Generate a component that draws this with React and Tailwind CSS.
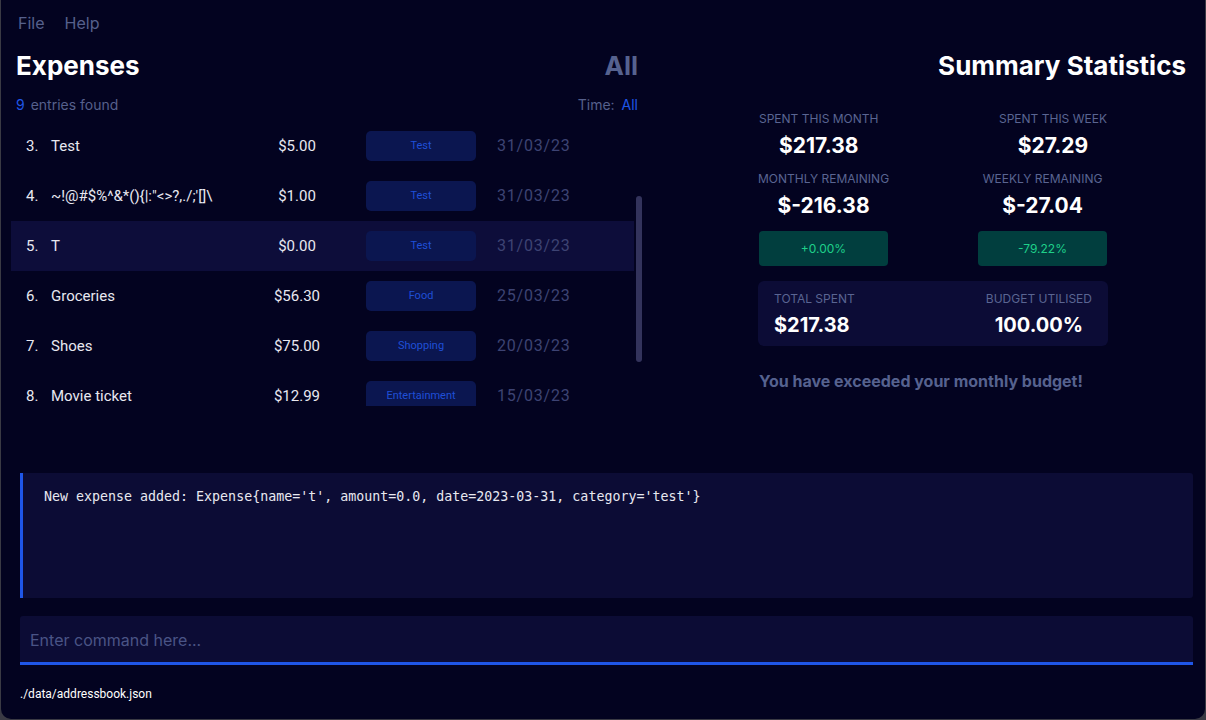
import React from 'react';

const rows = [
  { n: 3, name: 'Test', amount: '$5.00', cat: 'Test', date: '31/03/23' },
  { n: 4, name: `~!@#$%^&*(){|:"<>?,./;'[]\\`, amount: '$1.00', cat: 'Test', date: '31/03/23' },
  { n: 5, name: 'T', amount: '$0.00', cat: 'Test', date: '31/03/23', selected: true },
  { n: 6, name: 'Groceries', amount: '$56.30', cat: 'Food', date: '25/03/23' },
  { n: 7, name: 'Shoes', amount: '$75.00', cat: 'Shopping', date: '20/03/23' },
  { n: 8, name: 'Movie ticket', amount: '$12.99', cat: 'Entertainment', date: '15/03/23' },
];

function ExpenseRow({ row }) {
  return (
    <div className={`flex h-[50px] items-center text-[15px] text-[#e8e8f0] ${row.selected ? 'bg-[#0d0d3a]' : ''}`}>
      <span className="w-[40px] pl-[15px] shrink-0">{row.n}.</span>
      <span className="w-[205px] shrink-0 whitespace-nowrap">{row.name}</span>
      <span className="w-[82px] shrink-0 text-center">{row.amount}</span>
      <span className="ml-[28px] flex h-[30px] w-[110px] shrink-0 items-center justify-center rounded-[5px] bg-[#0b1650] text-[11px] text-[#1f4fd6]">
        {row.cat}
      </span>
      <span className="ml-[21px] text-[16px] tracking-[0.8px] text-[#3d4373]">{row.date}</span>
    </div>
  );
}

function Stat({ label, value, align }) {
  return (
    <div className={`flex flex-col items-center ${align}`}>
      <span className="whitespace-nowrap text-[12px] uppercase leading-none text-[#5a6592]">{label}</span>
      <span className="mt-[10px] whitespace-nowrap text-[21px] font-bold leading-none text-white">{value}</span>
    </div>
  );
}

export default function App() {
  return (
    <div className="h-[720px] w-[1206px] bg-[#3a3a44] font-['Inter',sans-serif]">
      <div className="mx-px flex h-[719px] flex-col rounded-b-[10px] bg-[#030320]">
        {/* menu bar */}
        <div className="flex h-[46px] items-center gap-[20px] pl-[17px] text-[16px] text-[#56608c]">
          <span>File</span>
          <span>Help</span>
        </div>

        {/* main content */}
        <div className="flex h-[427px]">
          {/* expense list */}
          <div className="ml-[10px] flex w-[631px] flex-col">
            <div className="flex h-[38px] items-center justify-between pl-[5px] pr-[4px]">
              <span className="text-[26px] font-bold text-white">Expenses</span>
              <span className="text-[26px] font-bold text-[#56628f]">All</span>
            </div>
            <div className="flex h-[37px] items-center justify-between pt-[3px] pl-[5px] pr-[4px] text-[14px] text-[#56608c]">
              <span>
                <span className="mr-[2px] text-[#1f56e8]">9</span> entries found
              </span>
              <span>
                Time: <span className="ml-[3px] text-[#1f56e8]">All</span>
              </span>
            </div>
            <div className="flex h-[285px]">
              <div className="w-[623px] overflow-hidden font-['Roboto',sans-serif]">
                {rows.map((r) => (
                  <ExpenseRow key={r.n} row={r} />
                ))}
              </div>
              <div className="ml-[2px] w-[6px]">
                <div className="mt-[75px] h-[166px] w-[6px] rounded-full bg-[#33335c]" />
              </div>
            </div>
          </div>

          {/* summary */}
          <div className="ml-[116px] flex w-[428px] flex-col">
            <div className="flex h-[38px] items-center justify-end">
              <span className="text-[26px] font-bold text-white">Summary Statistics</span>
            </div>
            <div className="mt-[29px] grid w-[350px] grid-cols-[129px_129px] gap-x-[90px] pl-px">
              <Stat label="Spent this month" value="$217.38" align="justify-self-start" />
              <Stat label="Spent this week" value="$27.29" align="justify-self-end" />
              <div className="mt-[17px]">
                <Stat label="Monthly remaining" value="$-216.38" />
              </div>
              <div className="mt-[17px]">
                <Stat label="Weekly remaining" value="$-27.04" />
              </div>
              <div className="mt-[15px] flex h-[35px] items-center justify-center rounded-[4px] bg-[#013e3e] text-[12px] text-[#1fd08a]">
                +0.00%
              </div>
              <div className="mt-[15px] flex h-[35px] items-center justify-center rounded-[4px] bg-[#013e3e] text-[12px] text-[#1fd08a]">
                -79.22%
              </div>
            </div>
            <div className="mt-[15px] flex h-[65px] w-[350px] items-center justify-between rounded-[6px] bg-[#0c0c36] px-[16px]">
              <div className="flex flex-col items-start">
                <span className="text-[12px] uppercase leading-none text-[#5a6592]">Total spent</span>
                <span className="mt-[10px] text-[20px] font-bold leading-none text-white">$217.38</span>
              </div>
              <div className="flex flex-col items-center">
                <span className="text-[12px] uppercase leading-none text-[#5a6592]">Budget utilised</span>
                <span className="mt-[10px] text-[20px] font-bold leading-none text-white">100.00%</span>
              </div>
            </div>
            <div className="mt-[23px] pl-px text-[16px] font-bold text-[#56628f]">
              You have exceeded your monthly budget!
            </div>
          </div>
        </div>

        {/* result display */}
        <div className="ml-[19px] mr-[12px] h-[125px] rounded-r-[3px] border-l-[3px] border-[#1f56e8] bg-[#0c0c35] pl-[21px] pt-[14px] font-['DejaVu_Sans_Mono',monospace] text-[13.3px] text-[#e8e8f0]">
          New expense added: Expense{"{"}name='t', amount=0.0, date=2023-03-31, category='test'{"}"}
        </div>

        {/* command box */}
        <div className="ml-[19px] mr-[12px] mt-[18px] flex h-[49px] items-center rounded-t-[3px] border-b-[3px] border-[#1f56e8] bg-[#0c0c35] pl-[10px] pt-[2px] text-[16px] text-[#4a5486]">
          Enter command here...
        </div>

        {/* status bar */}
        <div className="flex h-[54px] items-center pl-[19px] pt-[4px] font-['Roboto',sans-serif] text-[12px] text-white">
          ./data/addressbook.json
        </div>
      </div>
    </div>
  );
}
